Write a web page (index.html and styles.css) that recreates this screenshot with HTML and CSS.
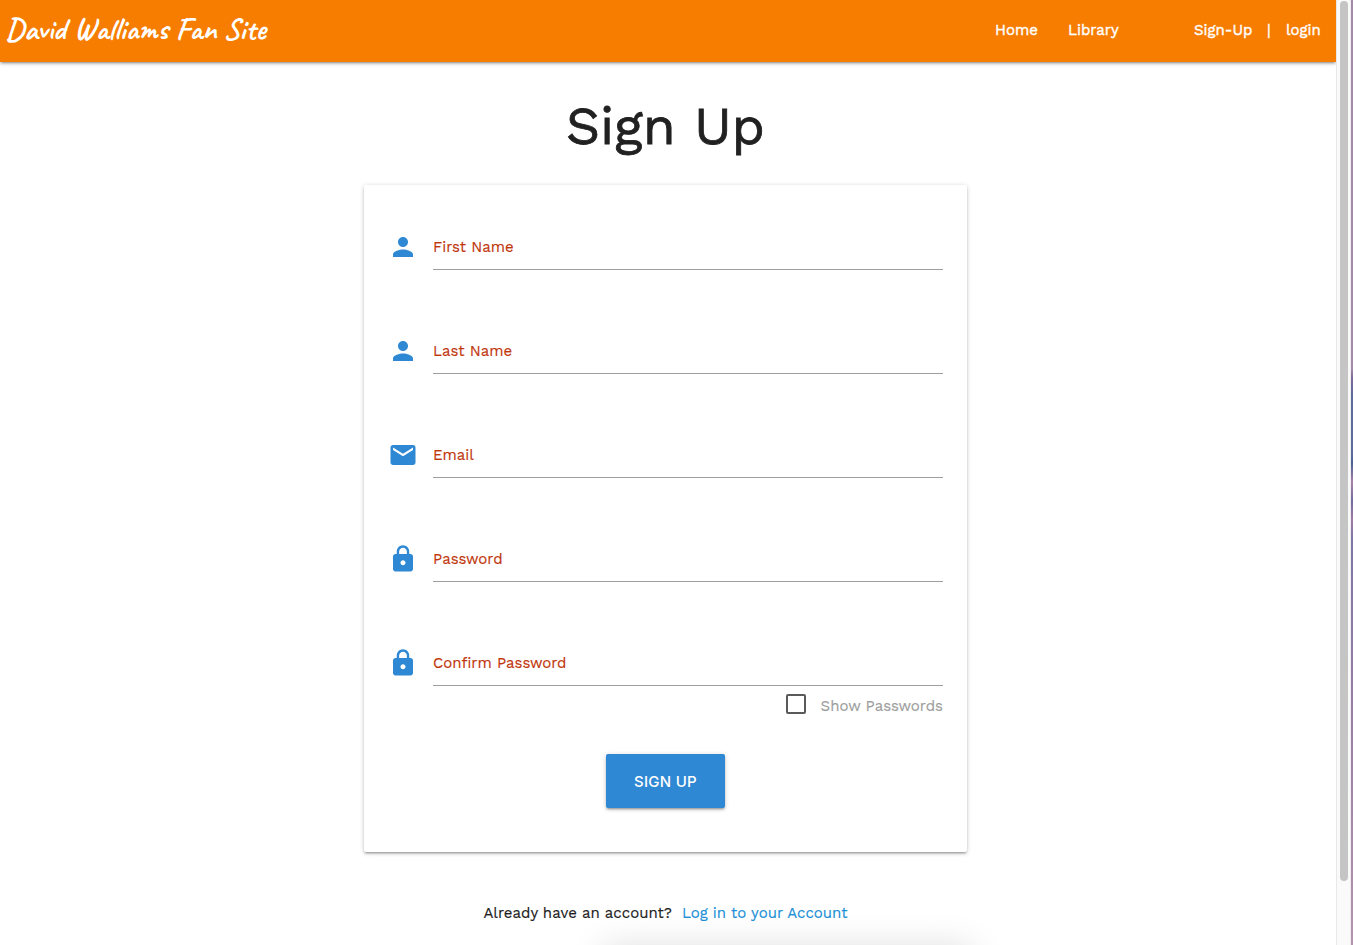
FILE: index.html
```html
<!DOCTYPE html>
<html lang="en">
<head>
<meta charset="utf-8">
<title>David Walliams Fan Site</title>
<link rel="stylesheet" href="styles.css">
</head>
<body>
<svg class="sprite" aria-hidden="true">
  <symbol id="person" viewBox="0 0 24 24"><path d="M12 12c2.210 0 4-1.790 4-4s-1.790-4-4-4-4 1.790-4 4 1.790 4 4 4zm0 2c-2.670 0-8 1.340-8 4v2h16v-2c0-2.660-5.330-4-8-4z"/></symbol>
  <symbol id="email" viewBox="0 0 24 24"><path d="M20 4H4c-1.100 0-1.990.9-1.990 2L2 18c0 1.100.9 2 2 2h16c1.100 0 2-.9 2-2V6c0-1.100-.9-2-2-2zm0 4l-8 5-8-5V6l8 5 8-5v2z"/></symbol>
  <symbol id="lock" viewBox="0 0 24 24"><path d="M18 8h-1V6c0-2.760-2.240-5-5-5S7 3.240 7 6v2H6c-1.100 0-2 .9-2 2v10c0 1.100.9 2 2 2h12c1.100 0 2-.9 2-2V10c0-1.100-.9-2-2-2zm-6 9c-1.100 0-2-.9-2-2s.9-2 2-2 2 .9 2 2-.9 2-2 2zm3.100-9H8.900V6c0-1.710 1.390-3.100 3.100-3.100s3.100 1.390 3.100 3.100v2z"/></symbol>
</svg>
<div class="window">
  <div class="page">
    <header class="navbar">
      <a class="brand">David Walliams Fan Site</a>
      <nav class="links">
        <a class="home">Home</a>
        <a class="library">Library</a>
        <a class="signup">Sign-Up</a>
        <span class="divider">|</span>
        <a class="login">login</a>
      </nav>
    </header>
    <main class="content">
      <h1 class="title">Sign Up</h1>
      <form class="card">
        <div class="field"><svg class="icon"><use href="#person"/></svg><label class="label">First Name</label></div>
        <div class="field"><svg class="icon"><use href="#person"/></svg><label class="label">Last Name</label></div>
        <div class="field"><svg class="icon"><use href="#email"/></svg><label class="label">Email</label></div>
        <div class="field"><svg class="icon"><use href="#lock"/></svg><label class="label">Password</label></div>
        <div class="field"><svg class="icon"><use href="#lock"/></svg><label class="label">Confirm Password</label></div>
        <div class="show"><span class="box"></span><span class="show-text">Show Passwords</span></div>
        <button class="submit" type="button">SIGN UP</button>
      </form>
      <p class="account"><span>Already have an account?</span><a class="account-link">Log in to your Account</a></p>
    </main>
    <div class="bottom-shadow"></div>
  </div>
  <div class="scrollbar"><div class="thumb"></div></div>
  <div class="edge"></div>
</div>
</body>
</html>
```
FILE: styles.css
```css
* { box-sizing: border-box; }
body { margin: 0; background: #fff; color: #212121; font: 400 15px/22px "Work Sans", "Open Sans", sans-serif; -webkit-text-stroke: .15px currentColor; }
.sprite { display: none; }
.window { display: flex; width: 1353px; height: 945px; overflow: hidden; }
.page { position: relative; width: 1336px; height: 945px; overflow: hidden; }
.navbar { display: flex; justify-content: space-between; height: 62px; padding: 0 15px 0 5.5px; background: #f77d00; color: #fff; box-shadow: 0 2px 2px rgba(0,0,0,.14), 0 3px 1px -2px rgba(0,0,0,.12), 0 1px 5px rgba(0,0,0,.2); }
.brand { font: 700 31px/58px Caveat, "Caveat Brush", Lato, cursive; white-space: nowrap; -webkit-text-stroke: 0; }
.links { display: flex; line-height: 60px; white-space: nowrap; -webkit-text-stroke: .4px currentColor; }
.links > * { display: block; }
.home { width: 73px; }
.library { width: 126px; }
.signup { width: 73px; }
.divider { width: 19px; }
.login { width: 35px; }
.content { display: flex; flex-direction: column; align-items: center; width: 1331px; }
.title { margin: 34px 0 29px; font-size: 53.4px; line-height: 60px; font-weight: 400; -webkit-text-stroke: .8px #212121; }
.card { display: flex; flex-direction: column; width: 603px; height: 667px; margin: 0; padding: 33px 24px 0 24px; border-radius: 2px; background: #fff; box-shadow: 0 2px 2px rgba(0,0,0,.14), 0 3px 1px -2px rgba(0,0,0,.12), 0 1px 5px rgba(0,0,0,.2); }
.field { display: flex; height: 104px; gap: 15px; padding-top: 7px; }
.icon { width: 30px; height: 30px; margin-top: 7px; fill: #2e88d3; flex: none; }
.label { flex: 1; height: 45px; padding-top: 11px; border-bottom: 1px solid #9e9e9e; color: #bf360c; white-space: nowrap; }
.show { display: flex; justify-content: flex-end; gap: 15px; height: 30px; margin-top: -44px; }
.box { width: 20px; height: 20px; border: 2px solid #5a5a5a; border-radius: 2px; }
.show-text { color: #9e9e9e; line-height: 24px; }
.submit { align-self: center; width: 119px; height: 54px; margin-top: 30px; padding: 1px 0 0; border: 0; border-radius: 2px; background: #2e88d3; color: #fff; font: 500 15px/54px Inter, sans-serif; letter-spacing: .25px; -webkit-text-stroke: 0; box-shadow: 0 2px 2px rgba(0,0,0,.14), 0 3px 1px -2px rgba(0,0,0,.12), 0 1px 5px rgba(0,0,0,.2); }
.account { display: flex; gap: 10px; margin: 50px 0 0; white-space: nowrap; }
.account-link { color: #218fd6; }
.bottom-shadow { position: absolute; left: 615px; top: 960px; width: 345px; height: 30px; box-shadow: 0 0 36px 12px rgba(0,0,0,.14); }
.scrollbar { width: 15px; height: 945px; padding: 1px 0 0 3px; border-left: 1px solid #e8e8e8; border-right: 1px solid #eee; background: #fafafa; }
.thumb { width: 8px; height: 880px; border-radius: 4px; background: #c5c5c5; }
.edge { width: 2px; height: 945px; background: linear-gradient(#a38aa8 0 39%, #7d6a9a 40%, #5d6b9d 42% 48%, #4c6293 49%, #a881a8 51%, #736c9f 53%, #a07ba3 55%, #7e76a5 57%, #987ea5 75%, #b494ad); }
```
